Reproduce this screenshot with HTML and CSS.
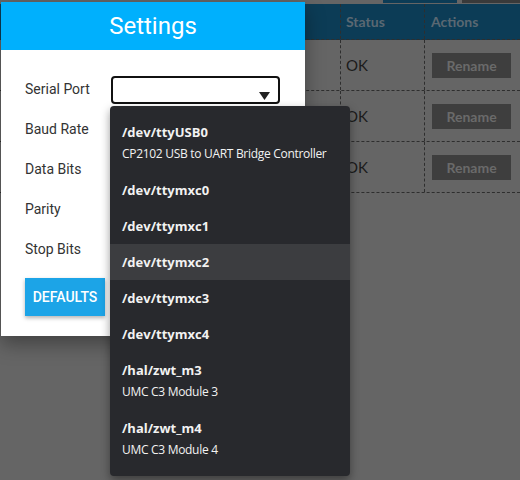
FILE: index.html
```html
<!DOCTYPE html>
<html>
<head>
<meta charset="utf-8">
<link rel="stylesheet" href="styles.css">
</head>
<body>
<div class="page">
  <div class="topstrip">
    <span class="tab tab-blue"></span>
    <span class="tab tab-dark"></span>
  </div>
  <div class="table">
    <div class="row head">
      <div class="cell c1"></div>
      <div class="cell c2">Status</div>
      <div class="cell c3">Actions</div>
    </div>
    <div class="row">
      <div class="cell c1"></div>
      <div class="cell c2">OK</div>
      <div class="cell c3"><span class="rename">Rename</span></div>
    </div>
    <div class="row">
      <div class="cell c1"></div>
      <div class="cell c2">OK</div>
      <div class="cell c3"><span class="rename">Rename</span></div>
    </div>
    <div class="row">
      <div class="cell c1"></div>
      <div class="cell c2">OK</div>
      <div class="cell c3"><span class="rename">Rename</span></div>
    </div>
  </div>
</div>

<div class="dialog">
  <div class="dialog-head">Settings</div>
  <div class="dialog-body">
    <div class="field"><span class="label">Serial Port</span>
      <div class="select"><svg class="arrow" width="11" height="8" viewBox="0 0 11 8"><path d="M0 0H11L5.5 8Z" fill="#222"/></svg></div>
    </div>
    <div class="field"><span class="label">Baud Rate</span></div>
    <div class="field"><span class="label">Data Bits</span></div>
    <div class="field"><span class="label">Parity</span></div>
    <div class="field"><span class="label">Stop Bits</span></div>
    <button class="defaults">DEFAULTS</button>
  </div>
</div>

<div class="menu">
  <div class="item"><div class="t">/dev/ttyUSB0</div><div class="s">CP2102 USB to UART Bridge Controller</div></div>
  <div class="item"><div class="t">/dev/ttymxc0</div></div>
  <div class="item"><div class="t">/dev/ttymxc1</div></div>
  <div class="item active"><div class="t">/dev/ttymxc2</div></div>
  <div class="item"><div class="t">/dev/ttymxc3</div></div>
  <div class="item"><div class="t">/dev/ttymxc4</div></div>
  <div class="item"><div class="t">/hal/zwt_m3</div><div class="s">UMC C3 Module 3</div></div>
  <div class="item"><div class="t">/hal/zwt_m4</div><div class="s">UMC C3 Module 4</div></div>
</div>
</body>
</html>
```

FILE: styles.css
```css
html, body {
  margin: 0;
  padding: 0;
  width: 520px;
  height: 480px;
  overflow: hidden;
  background: #656565;
}

.page {
  width: 520px;
  height: 480px;
  font-family: Lato, "Liberation Sans", sans-serif;
}

.topstrip {
  height: 3px;
  display: flex;
  padding-left: 383px;
  gap: 5px;
}
.tab { height: 3px; display: block; }
.tab-blue { width: 77px; background: #0c3c56; }
.tab-dark { width: 60px; background: #3a3a3a; }

.table {
  margin-top: 1px;
}
.row {
  display: grid;
  grid-template-columns: 341px 84px 95px;
  height: 51px;
  border-bottom: 1px dashed #2e2e2e;
  box-sizing: border-box;
}
.row.head {
  height: 36px;
  background: #0c3c56;
}
.cell {
  display: flex;
  align-items: center;
  box-sizing: border-box;
}
.c1 { border-right: 1px dashed #2e2e2e; }
.c2 {
  border-right: 1px dashed #2e2e2e;
  padding-left: 5px;
  font-size: 15px;
  color: #1b1b1b;
}
.c3 { padding-left: 7px; }
.head .c2, .head .c3 {
  color: #5a6872;
  font-weight: 700;
  font-size: 14px;
}
.head .c3 { padding-left: 6px; }
.rename {
  display: inline-flex;
  align-items: center;
  justify-content: center;
  width: 79px;
  height: 25px;
  background: #3e3e3e;
  color: #6a6a6a;
  font-size: 14px;
  font-weight: 700;
}

.dialog {
  position: absolute;
  left: 1px;
  top: 2px;
  width: 304px;
  height: 334px;
  background: #fff;
  box-shadow: 0 8px 18px rgba(0,0,0,0.35);
  font-family: Roboto, "Liberation Sans", sans-serif;
}
.dialog-head {
  height: 48px;
  background: #00b0fd;
  color: #fff;
  font-size: 24px;
  display: flex;
  align-items: center;
  justify-content: center;
}
.dialog-body {
  padding: 19px 0 0 24px;
}
.field {
  height: 40px;
  display: flex;
  align-items: center;
}
.label {
  width: 86px;
  font-size: 14px;
  color: #333;
}
.select {
  width: 169px;
  height: 28px;
  box-sizing: border-box;
  border: 2px solid #111;
  border-radius: 4px;
  margin-top: 2px;
  display: flex;
  justify-content: flex-end;
  align-items: flex-end;
  padding: 0 8px 2px 0;
}
.arrow { display: block; }
.defaults {
  margin-top: 9px;
  width: 80px;
  height: 38px;
  border: none;
  background: #1ca4e7;
  color: #fff;
  font-family: Roboto, "Liberation Sans", sans-serif;
  font-size: 14px;
  font-weight: 500;
  padding: 0;
  box-shadow: 0 2px 4px rgba(0,0,0,0.3);
}

.menu {
  position: absolute;
  left: 110px;
  top: 106px;
  width: 240px;
  padding: 8px 0;
  background: #28292d;
  border-radius: 4px;
  box-shadow: 0 4px 10px rgba(0,0,0,0.4);
  font-family: "Open Sans", "Noto Sans", sans-serif;
  color: #f2f2f2;
}
.item {
  padding: 9px 12px 9px;
}
.item .t {
  font-size: 13px;
  font-weight: 700;
  line-height: 18px;
}
.item .s {
  font-size: 12px;
  line-height: 20px;
  margin-top: 3px;
  margin-bottom: -1px;
  letter-spacing: -0.3px;
}
.item.active {
  background: #3c3d40;
}
```
